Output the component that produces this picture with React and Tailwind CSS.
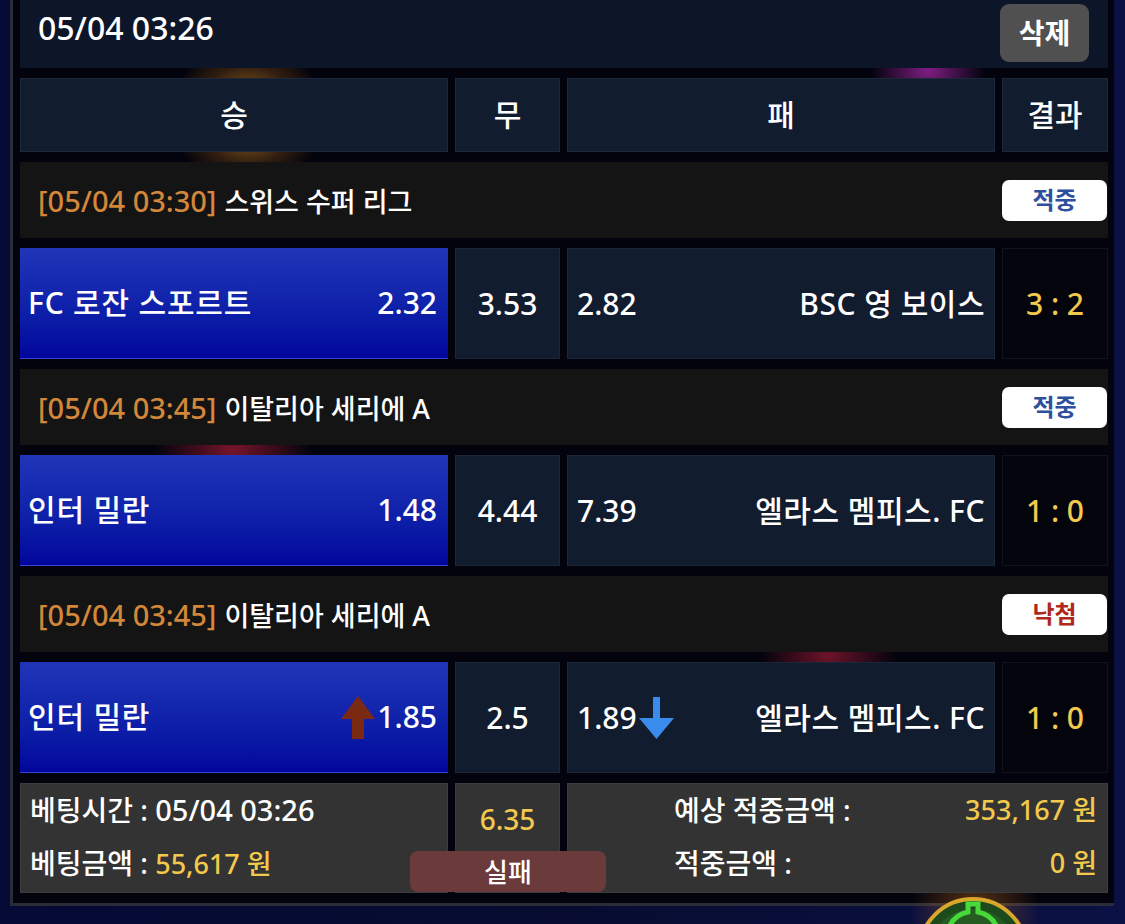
import React from "react";

const matches = [
  {
    time: "[05/04 03:30]",
    league: "스위스 수퍼 리그",
    result: "적중",
    home: "FC 로잔 스포르트",
    homeOdds: "2.32",
    draw: "3.53",
    awayOdds: "2.82",
    away: "BSC 영 보이스",
    score: "3 : 2",
  },
  {
    time: "[05/04 03:45]",
    league: "이탈리아 세리에 A",
    result: "적중",
    home: "인터 밀란",
    homeOdds: "1.48",
    draw: "4.44",
    awayOdds: "7.39",
    away: "엘라스 멤피스. FC",
    score: "1 : 0",
  },
  {
    time: "[05/04 03:45]",
    league: "이탈리아 세리에 A",
    result: "낙첨",
    home: "인터 밀란",
    homeOdds: "1.85",
    draw: "2.5",
    awayOdds: "1.89",
    away: "엘라스 멤피스. FC",
    score: "1 : 0",
    up: true,
    down: true,
  },
];

const UpArrow = () => (
  <svg width="34" height="43" viewBox="0 0 34 43" className="mr-[2px]">
    <path d="M17 0 L34 23 L23 23 L23 43 L11 43 L11 23 L0 23 Z" fill="#7a2a12" />
  </svg>
);

const DownArrow = () => (
  <svg width="35" height="42" viewBox="0 0 35 42" className="ml-[2px]">
    <path d="M14 0 L21 0 L21 21 L35 21 L17.5 42 L0 21 L14 21 Z" fill="#3a8cec" />
  </svg>
);

const League = ({ m }) => (
  <div className="h-[76px] bg-[#141414] flex items-center justify-between pl-[18px] pr-[1px]">
    <div className="flex items-baseline gap-[8px] text-white">
      <span className="text-[29px] text-[#d3873a]">{m.time}</span>
      <span className="text-[27px]">{m.league}</span>
    </div>
    <div
      className={
        "w-[105px] h-[41px] bg-white rounded-[7px] flex items-center justify-center text-[24px] font-bold " +
        (m.result === "낙첨" ? "text-[#b0281c]" : "text-[#2d4f9e]")
      }
    >
      {m.result}
    </div>
  </div>
);

const Match = ({ m }) => (
  <div className="h-[111px] grid grid-cols-[428px_105px_1fr_106px] gap-[7px] text-white text-[30px]">
    <div className="bg-gradient-to-b from-[#2035b8] to-[#03059c] border-b border-[#3245d0] flex items-center justify-between pl-[8px] pr-[11px]">
      <span className="tracking-[0.8px]">{m.home}</span>
      <span className="flex items-center">
        {m.up && <UpArrow />}
        {m.homeOdds}
      </span>
    </div>
    <div className="bg-[#121c2f] border border-[#1b2639] flex items-center justify-center">
      {m.draw}
    </div>
    <div className="bg-[#121c2f] border border-[#1b2639] flex items-center justify-between pl-[9px] pr-[9px]">
      <span className="flex items-center">
        {m.awayOdds}
        {m.down && <DownArrow />}
      </span>
      <span className="tracking-[0.5px]">{m.away}</span>
    </div>
    <div className="bg-[#04040d] border border-[#10131d] flex items-center justify-center text-[#f2c94c]">
      {m.score}
    </div>
  </div>
);

export default function App() {
  return (
    <div className="relative w-[1125px] h-[924px] overflow-hidden bg-gradient-to-r from-[#050a36] via-[#070c30] to-[#0b1144] font-['Noto_Sans','Noto_Sans_CJK_KR',sans-serif] font-medium leading-none">
      <div className="relative ml-[10px] w-[1104px] border-l-[3px] border-b-[3px] border-[#2a2d38] bg-[#02030d] pl-[7px] pr-[6px] pb-[10px]">
        {/* background emblems seen through the gaps */}
        <div className="absolute left-[150px] top-[45px] w-[170px] h-[140px] rounded-full bg-[radial-gradient(circle,_rgba(230,165,45,0.8)_0%,_rgba(140,80,20,0.35)_45%,_transparent_70%)]" />
        <div className="absolute left-[840px] top-[40px] w-[150px] h-[60px] rounded-full bg-[radial-gradient(circle,_rgba(180,40,180,0.7)_0%,_transparent_70%)]" />
        <div className="absolute left-[110px] top-[425px] w-[220px] h-[50px] rounded-full bg-[radial-gradient(circle,_rgba(180,30,60,0.65)_0%,_transparent_70%)]" />
        <div className="absolute left-[720px] top-[630px] w-[190px] h-[50px] rounded-full bg-[radial-gradient(circle,_rgba(180,30,60,0.6)_0%,_transparent_70%)]" />

        <div className="relative z-10 flex flex-col gap-[10px]">
          <div className="h-[68px] bg-[#0d1629] flex justify-between pl-[18px] pr-[19px]">
            <div className="pt-[8px] leading-[40px] text-[32px] text-white">05/04 03:26</div>
            <button className="mt-[4px] w-[89px] h-[58px] rounded-[9px] bg-[#505050] text-white text-[28px] font-bold">
              삭제
            </button>
          </div>

          <div className="h-[74px] grid grid-cols-[428px_105px_1fr_106px] gap-[7px] text-white text-[30px]">
            <div className="bg-[#121c2f] border border-[#1d283b] flex items-center justify-center">승</div>
            <div className="bg-[#121c2f] border border-[#1d283b] flex items-center justify-center">무</div>
            <div className="bg-[#121c2f] border border-[#1d283b] flex items-center justify-center">패</div>
            <div className="bg-[#121c2f] border border-[#1d283b] flex items-center justify-center">결과</div>
          </div>

          {matches.map((m, i) => (
            <React.Fragment key={i}>
              <League m={m} />
              <Match m={m} />
            </React.Fragment>
          ))}

          <div className="relative h-[110px] flex gap-[7px] text-white text-[28px]">
            <div className="w-[428px] bg-[#333333] border border-[#3c3c3c] pl-[9px] pt-[6px] flex flex-col gap-[13px]">
              <div className="leading-[40px]">
                베팅시간 : <span className="text-[29px]">05/04 03:26</span>
              </div>
              <div className="leading-[40px]">
                베팅금액 : <span className="text-[#f2c94c] text-[27px]">55,617 원</span>
              </div>
            </div>
            <div className="w-[105px] bg-[#333333] border border-[#3c3c3c] pt-[15px] text-center leading-[40px] text-[#f2c94c]">
              6.35
            </div>
            <div className="flex-1 bg-[#333333] border border-[#3c3c3c] pl-[106px] pr-[10px] pt-[6px] flex flex-col gap-[13px]">
              <div className="flex justify-between leading-[40px]">
                <span>예상 적중금액 :</span>
                <span className="text-[#f2c94c] text-[27px]">353,167 원</span>
              </div>
              <div className="flex justify-between leading-[40px]">
                <span>적중금액 :</span>
                <span className="text-[#f2c94c] text-[27px]">0 원</span>
              </div>
            </div>
            <div className="absolute left-[390px] top-[68px] w-[196px] h-[41px] rounded-[8px] bg-[#6b3a3b] flex items-center justify-center text-[26px]">
              실패
            </div>
          </div>
        </div>
      </div>

      {/* round green button at the bottom edge */}
      <div className="absolute left-[880px] top-[880px] w-[190px] h-[60px] rounded-full bg-[radial-gradient(circle,_rgba(200,110,30,0.45)_0%,_transparent_65%)]" />
      <svg className="absolute left-[916px] top-[896px]" width="114" height="114" viewBox="0 0 114 114">
        <circle cx="57" cy="57" r="54" fill="#1d4a1c" stroke="#d9a72c" strokeWidth="4" />
        <circle cx="57" cy="57" r="44" fill="#245c22" />
        <path d="M52 8 h10 v8 a26 26 0 1 1 -10 0 z" fill="none" stroke="#47d83a" strokeWidth="5" />
      </svg>
    </div>
  );
}
